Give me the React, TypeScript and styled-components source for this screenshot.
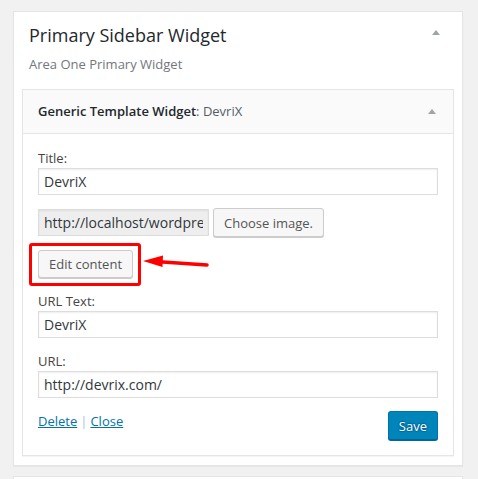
import React from "react";
import styled, { createGlobalStyle } from "styled-components";

const GlobalStyle = createGlobalStyle`
  html, body { margin: 0; padding: 0; }
  body {
    background: #f1f1f1;
    font-family: "Open Sans", "Noto Sans", sans-serif;
    color: #444;
    font-size: 13px;
  }
  * { box-sizing: border-box; }
`;

const Page = styled.div`
  padding: 11px 0 0 13px;
  display: flex;
  flex-direction: column;
  gap: 10px;
`;

const Card = styled.div`
  width: 450px;
  background: #fff;
  border: 1px solid #e5e5e5;
  box-shadow: 0 1px 1px rgba(0, 0, 0, 0.04);
  padding: ${(p: { $empty?: boolean }) => (p.$empty ? "0" : "11px 8px 9px 8px")};
  min-height: ${(p: { $empty?: boolean }) => (p.$empty ? "20px" : "auto")};
`;

const CardHeader = styled.div`
  display: flex;
  justify-content: space-between;
  align-items: flex-start;
  padding: 0 14px 0 7px;
`;

const CardTitle = styled.h2`
  margin: 0;
  font-size: 18px;
  font-weight: 500;
  line-height: 24px;
  color: #23282d;
`;

const Toggle = styled.svg`
  width: 8px;
  height: 5px;
  margin-top: ${(p: { $top: number }) => p.$top}px;
  fill: #a0a5aa;
  flex: none;
`;

const Description = styled.p`
  margin: 8px 0 16px;
  padding: 0 7px;
  font-size: 13px;
  line-height: 18px;
  color: #72777c;
`;

const Widget = styled.div`
  border: 1px solid #e5e5e5;
  box-shadow: 0 1px 1px rgba(0, 0, 0, 0.04);
  background: #fff;
`;

const WidgetTop = styled.div`
  height: 44px;
  background: #fafafa;
  border-bottom: 1px solid #e5e5e5;
  display: flex;
  align-items: center;
  justify-content: space-between;
  padding: 0 17px 0 15px;
`;

const WidgetTitle = styled.h3`
  margin: 0;
  font-size: 13px;
  line-height: 1;
  font-weight: 600;
  color: #23282d;
`;

const InTitle = styled.span`
  font-weight: 400;
  color: #555d66;
`;

const WidgetInside = styled.div`
  padding: 15px 15px 15px;
  display: flex;
  flex-direction: column;
`;

const Field = styled.div`
  display: flex;
  flex-direction: column;
  margin-top: ${(p: { $gap: number }) => p.$gap}px;
`;

const Label = styled.label`
  font-size: 13px;
  line-height: 18px;
  color: #444;
  margin-bottom: 1px;
`;

const TextInput = styled.input<{ $readonly?: boolean }>`
  height: 27px;
  width: ${(p) => (p.$readonly ? "171px" : "100%")};
  border: 1px solid #ddd;
  box-shadow: inset 0 1px 2px rgba(0, 0, 0, 0.07);
  background: ${(p) => (p.$readonly ? "#eee" : "#fff")};
  color: #32373c;
  font-family: "Open Sans", "Noto Sans", sans-serif;
  font-size: 14px;
  padding: 0 5px;
  margin: 0;
  outline: none;
`;

const Row = styled.div`
  display: flex;
  align-items: center;
  gap: 4px;
  margin-top: 13px;
`;

const Button = styled.button<{ $primary?: boolean }>`
  height: ${(p) => (p.$primary ? "29px" : "28px")};
  padding: 0 10px;
  border-radius: 3px;
  font-family: "Open Sans", "Noto Sans", sans-serif;
  font-size: 13px;
  line-height: 26px;
  cursor: pointer;
  border: 1px solid ${(p) => (p.$primary ? "#0073aa" : "#ccc")};
  border-bottom-color: ${(p) => (p.$primary ? "#006799" : "#ccc")};
  background: ${(p) => (p.$primary ? "#0085ba" : "#f7f7f7")};
  color: ${(p) => (p.$primary ? "#fff" : "#555")};
  box-shadow: 0 1px 0 ${(p) => (p.$primary ? "#006799" : "#ccc")};
  text-shadow: ${(p) =>
    p.$primary ? "0 -1px 1px #006799, 1px 0 1px #006799, 0 1px 1px #006799, -1px 0 1px #006799" : "none"};
  white-space: nowrap;
`;

const ChooseButton = styled(Button)`
  height: 29px;
`;

const Annotated = styled.div`
  position: relative;
  align-self: flex-start;
  margin-top: 13px;
  display: flex;
  &::after {
    content: "";
    position: absolute;
    top: -7px;
    left: -9px;
    right: -8px;
    bottom: -8px;
    border: 3px solid #f00;
    border-radius: 3px;
    pointer-events: none;
  }
`;

const Arrow = styled.svg`
  position: absolute;
  left: calc(100% + 8px);
  top: 2px;
  width: 70px;
  height: 20px;
  overflow: visible;
`;

const Actions = styled.div`
  margin-top: 13px;
  display: flex;
  justify-content: space-between;
  align-items: flex-start;
`;

const Links = styled.div`
  font-size: 13px;
  line-height: 18px;
  color: #ccc;
  margin-top: 1px;
`;

const Link = styled.a`
  color: #0073aa;
  text-decoration: underline;
`;

const Sep = styled.span`
  margin: 0 3px;
  color: #a0c8dc;
`;

export default function App() {
  return (
    <>
      <GlobalStyle />
      <Page>
        <Card>
          <CardHeader>
            <CardTitle>Primary Sidebar Widget</CardTitle>
            <Toggle $top={7} viewBox="0 0 8 5">
              <polygon points="4,0 8,5 0,5" />
            </Toggle>
          </CardHeader>
          <Description>Area One Primary Widget</Description>
          <Widget>
            <WidgetTop>
              <WidgetTitle>
                Generic Template Widget<InTitle>: DevriX</InTitle>
              </WidgetTitle>
              <Toggle $top={0} viewBox="0 0 8 5">
                <polygon points="4,0 8,5 0,5" />
              </Toggle>
            </WidgetTop>
            <WidgetInside>
              <Field $gap={0}>
                <Label>Title:</Label>
                <TextInput defaultValue="DevriX" />
              </Field>
              <Row>
                <TextInput $readonly readOnly defaultValue="http://localhost/wordpress/wp-content/uploads/devrix.png" />
                <ChooseButton>Choose image.</ChooseButton>
              </Row>
              <Annotated>
                <Button>Edit content</Button>
                <Arrow viewBox="0 0 70 20">
                  <polygon points="2,9 22,3.5 21.5,15" fill="#f00" />
                  <line x1="18" y1="9.8" x2="66" y2="13" stroke="#f00" strokeWidth="3.5" strokeLinecap="round" />
                </Arrow>
              </Annotated>
              <Field $gap={14}>
                <Label>URL Text:</Label>
                <TextInput defaultValue="DevriX" />
              </Field>
              <Field $gap={14}>
                <Label>URL:</Label>
                <TextInput defaultValue="http://devrix.com/" />
              </Field>
              <Actions>
                <Links>
                  <Link href="#">Delete</Link>
                  <Sep>|</Sep>
                  <Link href="#">Close</Link>
                </Links>
                <Button $primary>Save</Button>
              </Actions>
            </WidgetInside>
          </Widget>
        </Card>
        <Card $empty />
      </Page>
    </>
  );
}
